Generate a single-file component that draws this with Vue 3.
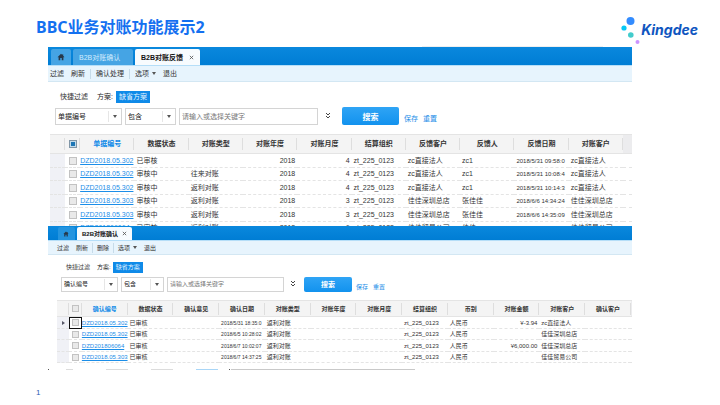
<script setup>
import { ref } from 'vue'

const windows = [
  {
    id: 'feedback',
    size: 'large',
    tabs: [
      { text: 'B2B对账确认', active: false },
      { text: 'B2B对账反馈', active: true },
    ],
    tools: [
      { text: '过滤' },
      { text: '刷新', divider: true },
      { text: '确认处理', divider: true },
      { text: '选项', caret: true },
      { text: '退出' },
    ],
    field: '单据编号',
    partial: true,
    spare: 9,
    lead: [15, 15],
    cell: 54,
    columns: ['单据编号', '数据状态', '对账类型', '对账年度', '对账月度', '结算组织', '反馈客户', '反馈人', '反馈日期', '对账客户'],
    numeric: [3, 4],
    dates: [8],
    rows: [
      ['DZD2018.05.302', '已审核', '', '2018', '4', 'zt_225_0123', 'zc直接法人', 'zc1', '2018/5/31 09:58:0', 'zc直接法人'],
      ['DZD2018.05.302', '审核中', '往来对账', '2018', '4', 'zt_225_0123', 'zc直接法人', 'zc1', '2018/5/31 10:08:4', 'zc直接法人'],
      ['DZD2018.05.302', '审核中', '返利对账', '2018', '4', 'zt_225_0123', 'zc直接法人', 'zc1', '2018/5/31 10:14:3', 'zc直接法人'],
      ['DZD2018.05.303', '审核中', '返利对账', '2018', '3', 'zt_225_0123', '佳佳深圳总店', '张佳佳', '2018/6/6 14:34:24', '佳佳深圳总店'],
      ['DZD2018.05.303', '审核中', '返利对账', '2018', '3', 'zt_225_0123', '佳佳深圳总店', '张佳佳', '2018/6/6 14:35:09', '佳佳深圳总店'],
      ['DZD201806064', '已审核', '返利对账', '2018', '6', 'zt_225_0123', '佳佳贸易公司', '佳佳', '2018/6/6 10:21:30', '佳佳贸易公司'],
    ],
  },
  {
    id: 'confirm',
    size: 'small',
    tabs: [{ text: 'B2B对账确认', active: true }],
    tools: [
      { text: '过滤' },
      { text: '刷新', divider: true },
      { text: '删除', divider: true },
      { text: '选项', caret: true },
      { text: '退出' },
    ],
    field: '确认编号',
    partial: false,
    spare: 1,
    lead: [12, 13],
    cell: 46,
    columns: ['确认编号', '数据状态', '确认意见', '确认日期', '对账类型', '对账年度', '对账月度', '结算组织', '币别', '对账金额', '对账客户', '确认客户'],
    numeric: [9],
    dates: [3],
    rows: [
      ['DZD2018.05.302', '已审核', '', '2018/5/31 18:35:0', '返利对账', '', '', 'zt_225_0123', '人民币', '¥-3.94', 'zc直接法人', ''],
      ['DZD2018.05.302', '已审核', '', '2018/6/5 10:28:02', '返利对账', '', '', 'zt_225_0123', '人民币', '', '佳佳深圳总店', ''],
      ['DZD201806064', '已审核', '', '2018/6/7 10:02:07', '返利对账', '', '', 'zt_225_0123', '人民币', '¥6,000.00', '佳佳深圳总店', ''],
      ['DZD2018.05.303', '已审核', '', '2018/6/7 14:37:25', '返利对账', '', '', 'zt_225_0123', '人民币', '', '佳佳贸易公司', ''],
    ],
  },
]

const keyword = ref({ feedback: '', confirm: '' })

function share(win, units) {
  const total = win.lead[0] + win.lead[1] + win.cell * win.columns.length + win.spare
  return { width: (units / total) * 100 + '%' }
}
</script>

<template>
  <main class="slide">
    <header class="masthead">
      <h1>BBC业务对账功能展示2</h1>
      <div class="brand">
        <svg class="dots" viewBox="0 0 20 30" aria-hidden="true">
          <circle cx="9.5" cy="6" r="4" fill="#338cff" />
          <circle cx="3" cy="13" r="2.6" fill="#05c8f5" />
          <circle cx="9.8" cy="20" r="2.8" fill="#42cccc" />
          <circle cx="16.5" cy="27" r="2" fill="#cb94ff" />
        </svg>
        <span class="wordmark">Kingdee</span>
      </div>
    </header>

    <div class="stack">
      <div class="trim" aria-hidden="true"></div>
      <section v-for="win in windows" :key="win.id" class="window" :class="win.size">
        <nav class="tabs">
          <button class="tab home" type="button" aria-label="首页">
            <svg viewBox="0 0 12 12" aria-hidden="true">
              <path d="M6 1 0.8 6.2h1.6V11h2.5V7.6h2.2V11h2.5V6.2h1.6L9.3 4.2V1.8H8v1.1z" fill="#26384a" />
            </svg>
          </button>
          <button v-for="tab in win.tabs" :key="tab.text" class="tab" :class="{ active: tab.active }" type="button">
            {{ tab.text }}
            <svg v-if="tab.active" class="close" viewBox="0 0 6 6" aria-hidden="true">
              <path d="M1 1l4 4M5 1L1 5" stroke="#555" stroke-width="1" />
            </svg>
          </button>
        </nav>

        <div class="toolbar">
          <button v-for="tool in win.tools" :key="tool.text" type="button" :class="{ divider: tool.divider }">
            {{ tool.text }}
            <svg v-if="tool.caret" class="caret" viewBox="0 0 4 3" aria-hidden="true"><path d="M0 0h4L2 3z" fill="#555" /></svg>
          </button>
        </div>

        <div class="scheme">
          <span>快捷过滤</span>
          <span class="label">方案:</span>
          <button type="button" class="tag">缺省方案</button>
        </div>

        <form class="filters" @submit.prevent>
          <span class="picker field">
            <select aria-label="字段"><option>{{ win.field }}</option></select>
            <svg class="caret" viewBox="0 0 4 3" aria-hidden="true"><path d="M0 0h4L2 3z" fill="#555" /></svg>
          </span>
          <span class="picker operator">
            <select aria-label="条件"><option>包含</option></select>
            <svg class="caret" viewBox="0 0 4 3" aria-hidden="true"><path d="M0 0h4L2 3z" fill="#555" /></svg>
          </span>
          <input v-model="keyword[win.id]" class="keyword" type="text" aria-label="关键字" placeholder="请输入或选择关键字" />
          <button type="button" class="more" aria-label="展开">
            <svg viewBox="0 0 6 8" aria-hidden="true">
              <path d="M1 1l2 2 2-2M1 4l2 2 2-2" fill="none" stroke="#444" stroke-width="1" />
            </svg>
          </button>
          <button type="submit" class="search">搜索</button>
          <span class="links"><a href="#save">保存</a><a href="#reset">重置</a></span>
        </form>

        <div class="grid">
          <table>
            <colgroup>
              <col :style="share(win, win.lead[0])" />
              <col :style="share(win, win.lead[1])" />
              <col v-for="c in win.columns" :key="c" :style="share(win, win.cell)" />
              <col :style="share(win, win.spare)" />
            </colgroup>
            <thead>
              <tr>
                <th></th>
                <th class="pick"><input type="checkbox" :class="{ partial: win.partial }" aria-label="全选" /></th>
                <th v-for="(c, i) in win.columns" :key="c" :class="{ key: i === 0 }">{{ c }}</th>
                <th></th>
              </tr>
            </thead>
            <tbody>
              <tr v-for="(row, r) in win.rows" :key="r">
                <td class="gutter">
                  <svg v-if="!win.partial && r === 0" viewBox="0 0 3 4" aria-hidden="true"><path d="M0 0l3 2-3 2z" fill="#556" /></svg>
                </td>
                <td class="pick" :class="{ current: !win.partial && r === 0 }"><input type="checkbox" :aria-label="'选择第' + (r + 1) + '行'" /></td>
                <td
                  v-for="(value, i) in row"
                  :key="i"
                  :class="{ numeric: win.numeric.includes(i), date: win.dates.includes(i), code: i === 0 }"
                >
                  <a v-if="i === 0" href="#doc">{{ value }}</a>
                  <template v-else>{{ value }}</template>
                </td>
                <td></td>
              </tr>
            </tbody>
          </table>
        </div>
      </section>
      <div class="edge" aria-hidden="true">
        <i class="tick"></i><i class="stub"></i><i class="wide"></i><i class="wide"></i><i class="wide blue"></i><i class="tick"></i><i class="rail"></i>
      </div>
    </div>

    <footer>1</footer>
  </main>
</template>

<style>
body {
  margin: 0;
  background: #fff;
}
</style>

<style scoped>
.slide {
  display: flex;
  flex-direction: column;
  min-height: 100vh;
  box-sizing: border-box;
  font-family: 'Liberation Sans', 'Noto Sans CJK SC', sans-serif;
  color: #333;
}
button,
input,
select {
  font: inherit;
  color: inherit;
  margin: 0;
  padding: 0;
  border: 0;
  background: none;
  border-radius: 0;
  box-sizing: border-box;
}
a {
  color: #1c8ee8;
}
svg {
  display: block;
  flex: none;
}

.masthead {
  display: flex;
  justify-content: space-between;
  align-items: flex-start;
  height: 46px;
  padding: 15px 22px 0 36px;
  box-sizing: border-box;
}
h1 {
  margin: 0;
  font: 700 16px/24px 'Noto Sans', 'Noto Sans CJK SC', sans-serif;
  color: #1470f0;
}
.brand {
  display: flex;
}
.dots {
  width: 20px;
  height: 30px;
}
.wordmark {
  font: italic 700 14px/30px Inter, 'Liberation Sans', sans-serif;
  color: #0f56c0;
}

.stack {
  padding: 0 88px 0 48px;
}
.trim {
  width: 31%;
  height: 1px;
  margin-left: 64%;
  background: #efefef;
}
.window {
  background: #fff;
}
.large {
  font-size: 7px;
}
.small {
  font-size: 6px;
}

.tabs {
  display: flex;
  align-items: flex-end;
  gap: 2px;
  height: 18px;
  padding-left: 3px;
  background: linear-gradient(#0a88dd, #007dd4);
  border-bottom: 1px solid #b5def8;
}
.tab {
  display: flex;
  align-items: center;
  gap: 6px;
  height: 16px;
  padding: 0 6px;
  background: #45a4e4;
  color: #d3ecfd;
  font-size: 7px;
  border-radius: 2px 2px 0 0;
  white-space: nowrap;
}
.large .tab:nth-child(2) {
  width: 60px;
}
.home {
  width: 20px;
}
.home svg {
  width: 8px;
  height: 8px;
}
.tab.active {
  background: #f7fbfe;
  color: #111;
  font-weight: 700;
}
.close {
  width: 5px;
  height: 5px;
}
.small .tabs {
  height: 14px;
  padding-left: 10px;
}
.small .tab {
  height: 13px;
  font-size: 6px;
  padding: 0 5px;
  gap: 4px;
}
.small .home {
  width: 17px;
  background: #2494df;
}
.small .home svg {
  width: 6px;
  height: 6px;
}

.toolbar {
  display: flex;
  align-items: center;
  height: 15px;
  padding-left: 2px;
  background: #e7f4fd;
  border-bottom: 1px solid #d3e7f3;
}
.toolbar button {
  display: flex;
  align-items: center;
  gap: 3px;
  margin-right: 7px;
  line-height: 10px;
}
.toolbar .divider {
  margin-right: 5px;
  padding-right: 5px;
  border-right: 1px solid #c6dbe9;
}
.caret {
  width: 4px;
  height: 3px;
}
.small .toolbar {
  height: 13px;
  padding-left: 9px;
}
.small .toolbar .divider {
  margin-right: 4px;
  padding-right: 4px;
}

.scheme {
  display: flex;
  align-items: center;
  padding: 9px 0 0 12px;
  line-height: 12px;
}
.label {
  margin: 0 3px 0 9px;
  color: #222;
}
.tag {
  padding: 0 3px;
  background: #0f8ae8;
  color: #e6f4ff;
  line-height: 12px;
}
.small .scheme {
  padding: 7px 0 0 18px;
  line-height: 11px;
}
.small .label {
  margin: 0 2px 0 7px;
}
.small .tag {
  line-height: 11px;
}

.filters {
  display: flex;
  align-items: center;
  padding: 4px 0 0 7px;
}
.picker {
  display: flex;
  align-items: center;
  height: 17px;
  margin-right: 3px;
  padding-right: 4px;
  border: 1px solid #d4d4d4;
  box-sizing: border-box;
}
.picker select {
  flex: 1;
  min-width: 0;
  height: 11px;
  margin-right: 4px;
  padding-left: 2px;
  border-right: 1px solid #e6e6e6;
  appearance: none;
  color: #222;
}
.field {
  width: 67px;
}
.operator {
  width: 51px;
}
.keyword {
  width: 139px;
  height: 17px;
  padding-left: 2px;
  border: 1px solid #d4d4d4;
}
.keyword::placeholder {
  color: #777;
}
.more {
  margin: 0 11px 0 7px;
}
.more svg {
  width: 6px;
  height: 8px;
}
.search {
  width: 57px;
  height: 18px;
  border-radius: 2px;
  background: linear-gradient(#2fa4f5, #1292ee);
  color: #fff;
  font-size: 8px;
  font-weight: 700;
}
.links {
  display: flex;
  gap: 5px;
  padding: 6px 0 0 5px;
  line-height: 10px;
}
.links a {
  text-decoration: none;
}
.small .filters {
  padding: 3px 0 0 13px;
}
.small .picker,
.small .keyword {
  height: 15px;
}
.small .field {
  width: 57px;
}
.small .operator {
  width: 43px;
}
.small .keyword {
  width: 117px;
}
.small .more {
  margin: 0 8px 0 6px;
}
.small .search {
  width: 48px;
  height: 15px;
  font-size: 7px;
}
.small .links {
  padding-left: 4px;
}

.grid {
  margin: 9px 0 0 2px;
  overflow: hidden;
}
.large .grid {
  height: 92px;
}
.small .grid {
  margin: 8px 0 0 9px;
}
table {
  width: 100%;
  table-layout: fixed;
  border-collapse: separate;
  border-spacing: 0;
}
th,
td {
  padding: 0;
  white-space: nowrap;
  text-align: left;
  box-sizing: border-box;
  line-height: 10px;
}
th {
  height: 20px;
  text-align: center;
  color: #333;
  background: linear-gradient(#dedede, #dedede) right center / 1px 12px no-repeat, #f4f4f4;
  border-top: 1px solid #e4e4e4;
  border-bottom: 1px solid #e4e4e4;
}
th:last-child {
  background: #ececee;
}
th.key {
  color: #0f8ae8;
}
td {
  height: 14px;
  padding-left: 2px;
  border-bottom: 1px dashed #e4e4e4;
}
tr:nth-child(even) td {
  height: 13px;
}
.gutter {
  background: #f0f1f6;
}
.numeric {
  text-align: right;
  padding-right: 2px;
}
.code {
  padding-left: 0;
}
.large .date {
  font-size: 6px;
}
.small .date {
  font-size: 5px;
}
td.pick,
th.pick {
  padding: 0;
  text-align: center;
}
.pick input {
  display: block;
  width: 8px;
  height: 8px;
  margin: 0 auto;
  appearance: none;
  border: 1px solid #c2c2c2;
  background: #e9e9e9;
}
.pick .partial {
  border-color: #8196a6;
  background: #1d76b5;
  box-shadow: inset 0 0 0 1px #c3dcec;
}
.small th {
  height: 17px;
}
.small td {
  height: 12px;
}
.small tr:nth-child(even) td {
  height: 11px;
}
.small .pick input {
  width: 7px;
  height: 7px;
}
.small .current {
  outline: 1px solid #111;
  outline-offset: -1px;
}
.gutter svg {
  width: 3px;
  height: 4px;
  margin-left: 3px;
}

.edge {
  display: flex;
  align-items: flex-start;
  gap: 23px;
  height: 1px;
  margin-top: 6px;
}
.edge i {
  flex: none;
  width: 7px;
  height: 1px;
  background: #dcdcdc;
}
.edge .stub {
  margin-right: 10px;
}
.edge .wide {
  width: 22px;
}
.edge .blue {
  background: #a9d6f7;
}
.edge .tick {
  width: 1px;
  margin-right: -6px;
  background: #555;
}
.edge .tick ~ .tick {
  margin-left: -12px;
}
.edge .rail {
  width: 184px;
  margin-left: -16px;
  background: #c9c9c9;
}

footer {
  margin-top: 18px;
  padding-left: 36px;
  font-size: 8px;
  line-height: 10px;
  color: #2b62b5;
}
</style>
